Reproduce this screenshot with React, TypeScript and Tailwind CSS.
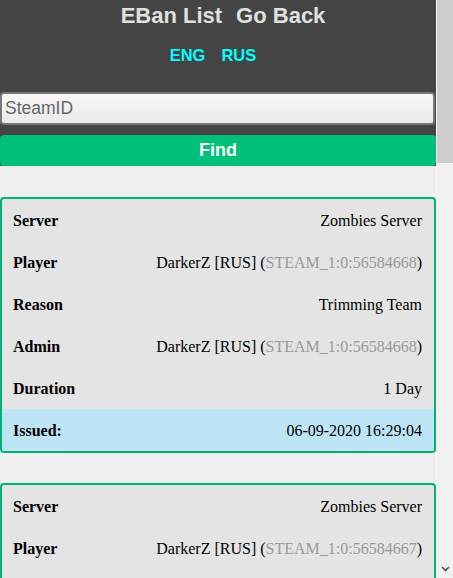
const bans = [
  { server: "Zombies Server", player: "DarkerZ [RUS]", pid: "STEAM_1:0:56584668", reason: "Trimming Team", admin: "DarkerZ [RUS]", aid: "STEAM_1:0:56584668", duration: "1 Day", issued: "06-09-2020 16:29:04" },
  { server: "Zombies Server", player: "DarkerZ [RUS]", pid: "STEAM_1:0:56584667", reason: "Trimming Team", admin: "DarkerZ [RUS]", aid: "STEAM_1:0:56584668", duration: "1 Day", issued: "06-09-2020 16:20:11" },
];

const Row = ({ label, children, issued }: { label: string; children: React.ReactNode; issued?: boolean }) => (
  <div className={`flex items-center justify-between h-[42px] pl-[11px] pr-[12px] pt-[2px] ${issued ? "bg-[#bde5f6]" : ""}`}>
    <span className="font-bold">{label}</span>
    <span>{children}</span>
  </div>
);

const Steam = ({ id }: { id: string }) => (
  <>
    {" "}(<span className="text-[#999999]">{id}</span>)
  </>
);

const App = () => {
  return (
    <div className="h-[578px] overflow-hidden flex bg-[#efefef]">
      <div className="w-[436px] shrink-0">
        {/* header */}
        <div className="bg-[#444444] font-['Liberation_Sans',Arial,sans-serif]">
          <div className="h-[29px] flex items-center justify-center gap-[14px] text-[22px] font-bold text-[#e0e0e0] leading-none pt-[2px] pl-[10px]">
            <span>EBan List</span>
            <span>Go Back</span>
          </div>
          <div className="h-[50px] flex items-center justify-center gap-[16px] text-[16.5px] font-bold text-[#00ffff] pt-[3px] pr-[10px]">
            <span>ENG</span>
            <span>RUS</span>
          </div>
          <div className="pt-[13px]">
            <input
              type="text"
              placeholder="SteamID"
              className="block w-[435px] h-[33px] px-[3px] rounded-[4px] border-2 border-[#777777] bg-gradient-to-b from-[#f7f7f7] to-[#ebebeb] text-[17.5px] placeholder-[#666666] outline-none"
            />
          </div>
          <div className="pt-[10px]">
            <div className="h-[31px] w-[436px] rounded-[4px] bg-[#00bf78] text-white text-[18px] font-bold flex items-center justify-center">
              Find
            </div>
          </div>
        </div>
        {/* ban list */}
        <div className="pt-[31px] font-['Liberation_Serif',serif] text-[16px] text-black">
          {bans.map((b, i) => (
            <div key={i} className="w-[436px] mb-[30px] rounded-[4px] border-2 border-[#00b074] bg-[#e4e4e4] overflow-hidden">
              <Row label="Server">{b.server}</Row>
              <Row label="Player">
                {b.player}
                <Steam id={b.pid} />
              </Row>
              <Row label="Reason">{b.reason}</Row>
              <Row label="Admin">
                {b.admin}
                <Steam id={b.aid} />
              </Row>
              <Row label="Duration">{b.duration}</Row>
              <Row label="Issued:" issued>
                {b.issued}
              </Row>
            </div>
          ))}
        </div>
      </div>
      {/* scrollbar */}
      <div className="flex-1 flex flex-col border-l border-[#f9f9f9] bg-[#f0f0f0]">
        <div className="h-[163px] bg-[#cdcdcd]"></div>
        <div className="flex-1"></div>
        <div className="h-[17px] flex items-center justify-center pb-[2px]">
          <svg width="9" height="6" viewBox="0 0 9 6">
            <path d="M1 1 L4.5 4.5 L8 1" stroke="#505050" strokeWidth="1.6" fill="none" />
          </svg>
        </div>
      </div>
    </div>
  );
};

export default App;
